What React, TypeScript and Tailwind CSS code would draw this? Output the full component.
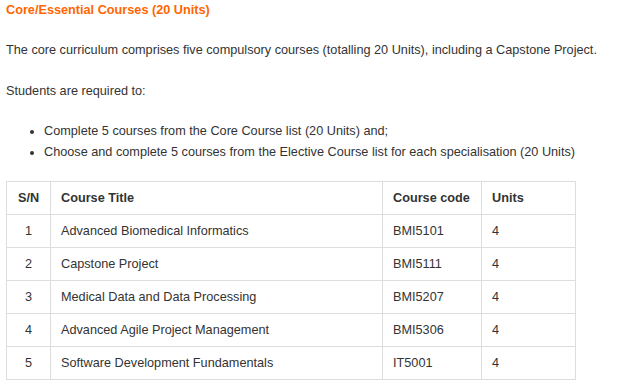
import React from "react";

const courses = [
  { sn: 1, title: "Advanced Biomedical Informatics", code: "BMI5101", units: 4 },
  { sn: 2, title: "Capstone Project", code: "BMI5111", units: 4 },
  { sn: 3, title: "Medical Data and Data Processing", code: "BMI5207", units: 4 },
  { sn: 4, title: "Advanced Agile Project Management", code: "BMI5306", units: 4 },
  { sn: 5, title: "Software Development Fundamentals", code: "IT5001", units: 4 },
];

export default function App() {
  return (
    <div className="bg-white min-h-screen px-[6px] text-[12.7px] leading-[20px] text-[#333] font-['Liberation_Sans',Arial,sans-serif]">
      <h3 className="font-bold text-[#ff6600] leading-[20px]">Core/Essential Courses (20 Units)</h3>
      <p className="mt-[20px] whitespace-nowrap">
        The core curriculum comprises five compulsory courses (totalling 20 Units), including a Capstone Project.
      </p>
      <p className="mt-[21px]">Students are required to:</p>
      <ul className="mt-[20px] pl-[38px] list-disc leading-[21px]">
        <li>Complete 5 courses from the Core Course list (20 Units) and;</li>
        <li className="whitespace-nowrap">Choose and complete 5 courses from the Elective Course list for each specialisation (20 Units)</li>
      </ul>
      <table className="mt-[18px] w-[570px] border-collapse">
        <thead>
          <tr className="h-[33px] font-bold">
            <th className="w-[44px] border border-[#ddd] text-center">S/N</th>
            <th className="w-[332px] border border-[#ddd] text-left pl-[10px]">Course Title</th>
            <th className="w-[99px] border border-[#ddd] text-left pl-[10px]">Course code</th>
            <th className="border border-[#ddd] text-left pl-[10px]">Units</th>
          </tr>
        </thead>
        <tbody>
          {courses.map((c) => (
            <tr key={c.sn} className="h-[33px]">
              <td className="border border-[#ddd] text-center">{c.sn}</td>
              <td className="border border-[#ddd] pl-[10px]">{c.title}</td>
              <td className="border border-[#ddd] pl-[10px]">{c.code}</td>
              <td className="border border-[#ddd] pl-[10px]">{c.units}</td>
            </tr>
          ))}
        </tbody>
      </table>
    </div>
  );
}
